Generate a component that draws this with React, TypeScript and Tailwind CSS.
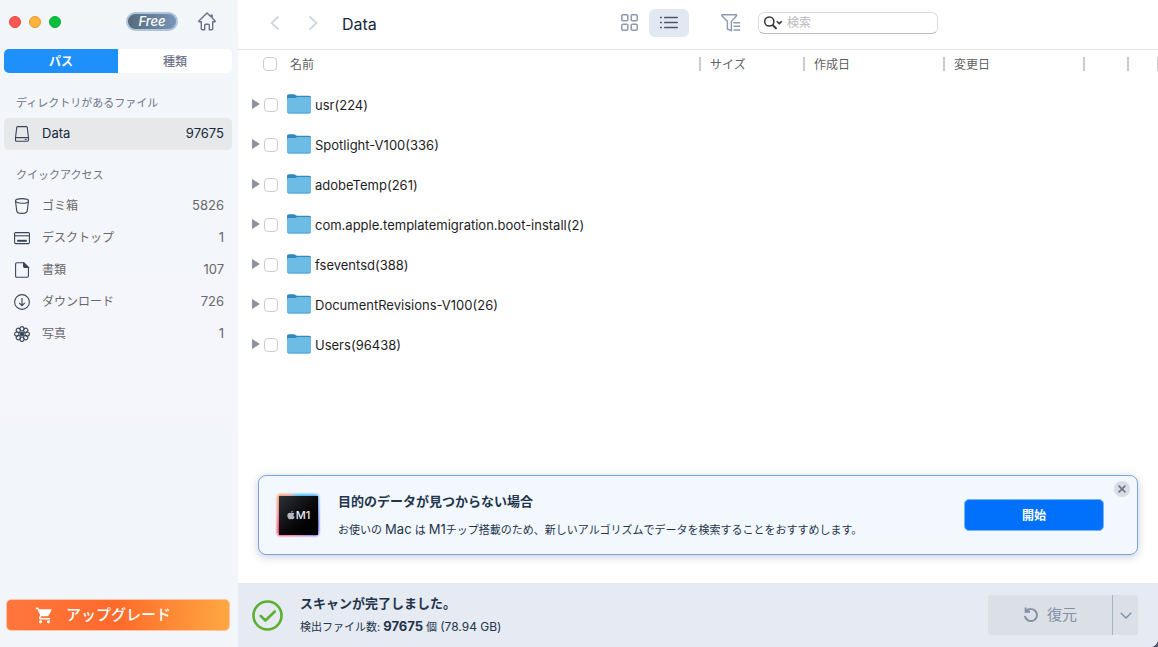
import { useState } from "react";
import type { ReactNode } from "react";
import { FaApple } from "react-icons/fa";
import { MdShoppingCart } from "react-icons/md";

type SidebarItem = {
  name: string;
  count: number;
  icon: ReactNode;
};

type Folder = {
  name: string;
  count: number;
};

const FOLDERS: Folder[] = [
  { name: "usr", count: 224 },
  { name: "Spotlight-V100", count: 336 },
  { name: "adobeTemp", count: 261 },
  { name: "com.apple.templatemigration.boot-install", count: 2 },
  { name: "fseventsd", count: 388 },
  { name: "DocumentRevisions-V100", count: 26 },
  { name: "Users", count: 96438 },
];

const PETALS = [0, 45, 90, 135, 180, 225, 270, 315];

const lineIcon = {
  width: 16,
  height: 16,
  viewBox: "0 0 16 16",
  fill: "none",
  stroke: "#39465a",
  strokeWidth: 1.1,
  "aria-hidden": true,
};

const DriveIcon = () => (
  <svg {...lineIcon}>
    <path d="M2.8 1.2Q3 .6 3.7.6h8.6q.7 0 .9.6l1.3 10.6v2.3q0 1.2-1.2 1.2H2.7q-1.2 0-1.2-1.2v-2.3z" />
    <path d="M1.6 12q.3-.4 1.1-.4h10.6q.8 0 1.1.4" />
    <path d="M10.8 13.5h1.8" />
  </svg>
);

const TrashIcon = () => (
  <svg {...lineIcon}>
    <ellipse cx="8" cy="2.9" rx="6.5" ry="2.3" />
    <path d="M1.5 3l1.2 9.6Q3 15.4 8 15.4t5.3-2.8L14.5 3" />
  </svg>
);

const DesktopIcon = () => (
  <svg {...lineIcon}>
    <rect x=".6" y="2.6" width="14.8" height="11" rx="1" />
    <path d="M.6 5.8h14.8" />
    <path d="M3.2 10.8h9.6" strokeWidth="2" />
  </svg>
);

const DocumentIcon = () => (
  <svg {...lineIcon}>
    <path d="M2.8.7h7l4.6 4.7v8.7q0 1.2-1.2 1.2H2.8q-1.2 0-1.2-1.2V1.9Q1.6.7 2.8.7z" />
    <path d="M9.6.7v3.9q0 .9.9.9h3.9z" fill="#39465a" />
  </svg>
);

const DownloadIcon = () => (
  <svg {...lineIcon}>
    <circle cx="8" cy="8" r="7.4" />
    <path d="M8 4v7.6M5.2 8.9L8 11.7l2.8-2.8" />
  </svg>
);

const PhotosIcon = () => (
  <svg {...lineIcon}>
    {PETALS.map((angle) => (
      <ellipse
        key={angle}
        cx="8"
        cy="2.8"
        rx="2"
        ry="2.2"
        transform={`rotate(${angle} 8 8)`}
      />
    ))}
    <circle cx="8" cy="8" r="1.8" fill="#39465a" />
  </svg>
);

const QUICK_ACCESS: SidebarItem[] = [
  { name: "ゴミ箱", count: 5826, icon: <TrashIcon /> },
  { name: "デスクトップ", count: 1, icon: <DesktopIcon /> },
  { name: "書類", count: 107, icon: <DocumentIcon /> },
  { name: "ダウンロード", count: 726, icon: <DownloadIcon /> },
  { name: "写真", count: 1, icon: <PhotosIcon /> },
];

const HomeIcon = () => (
  <svg width="18" height="19" viewBox="0 0 18 19" fill="none" stroke="#6a7389" strokeWidth="1.4" strokeLinejoin="round">
    <path d="M9 .9L.9 8.9q-.3.7.4.9h2v6.9q0 1.1 1.1 1.1h2.3v-4.6q0-1 1-1h2.6q1 0 1 1v4.6h2.3q1.1 0 1.1-1.1V9.8h2q.7-.2.4-.9l-2.9-2.9V3.2h-1.3v1.5z" />
  </svg>
);

const FolderIcon = () => (
  <svg width="24" height="20" viewBox="0 0 24 20" className="shrink-0" aria-hidden="true">
    <path d="M0 2Q0 .2 1.8.2h5q1 0 1.7.8t1.8.8h11.9Q24 1.8 24 3.5V10H0z" fill="#3089b9" />
    <path d="M0 5.4Q0 4 1.5 4h5.8q1 0 1.7-.5t1.6-.5h11.8Q24 3 24 4.6v13q0 1.9-1.9 1.9H1.9Q0 19.5 0 17.6z" fill="#6cbce6" />
    <path d="M.2 18q.3 1.500 1.700 1.500h20.200q1.400 0 1.700-1.500-.6.6-1.700.6H1.900Q.8 18.600.2 18z" fill="#4fa3d2" />
  </svg>
);

const Checkbox = ({ label }: { label: string }) => (
  <input
    type="checkbox"
    aria-label={label}
    className="size-3.5 shrink-0 appearance-none rounded-[4px] border border-[#cdccd0] bg-white checked:bg-[#1e90fb]"
  />
);

const SidebarRow = ({ item, active }: { item: SidebarItem; active?: boolean }) => (
  <button
    type="button"
    className={
      active
        ? "flex h-8 w-full items-center rounded-[5px] bg-[#e6e8ea] pl-2.5 pr-2 text-[#16283c]"
        : "flex h-8 w-full items-center rounded-[5px] pl-2.5 pr-2 text-[#68686b]"
    }
  >
    {item.icon}
    <span className={active ? "ml-3 text-[13px]" : "ml-3 text-xs"}>{item.name}</span>
    <span className="ml-auto text-[13px]">{item.count}</span>
  </button>
);

const Sidebar = () => {
  const [tab, setTab] = useState("path");

  const tabClass = (name: string) =>
    tab === name
      ? "flex-1 bg-[#1e90fb] pt-0.5 text-xs font-bold text-white"
      : "flex-1 bg-white pt-0.5 text-xs font-medium text-[#6e7389]";

  return (
    <aside className="flex w-[238px] shrink-0 flex-col bg-linear-to-b from-[#f2f6f9] via-[#f4f6fb] to-[#f2f5f9]">
      <div className="flex h-[43px] items-center pl-[9px]">
        <div className="flex gap-2">
          <span className="size-3 rounded-full border border-[#e2463f] bg-[#fc5753]" />
          <span className="size-3 rounded-full border border-[#e09b34] bg-[#fdb23c]" />
          <span className="size-3 rounded-full border border-[#10ab33] bg-[#05c13c]" />
        </div>
        <span className="ml-[65px] flex h-[19px] w-[52px] items-center justify-center rounded-full border-2 border-[#afc5dc] bg-linear-to-r from-[#566a7c] to-[#7797b8] pb-0.5 text-[13px] leading-4 font-medium text-white italic">
          Free
        </span>
        <button type="button" aria-label="ホーム" className="ml-5">
          <HomeIcon />
        </button>
      </div>

      <div className="mx-1 mt-1.5 mr-1.5 flex h-6 overflow-hidden rounded-[5px]">
        <button type="button" className={tabClass("path")} onClick={() => setTab("path")}>
          パス
        </button>
        <button type="button" className={tabClass("type")} onClick={() => setTab("type")}>
          種類
        </button>
      </div>

      <nav className="mt-[21px] pl-1 pr-1.5">
        <h2 className="mb-1.5 pl-3 text-[11px] leading-[18px] text-[#6e7389]">
          ディレクトリがあるファイル
        </h2>
        <SidebarRow item={{ name: "Data", count: 97675, icon: <DriveIcon /> }} active />
        <h2 className="mt-4 mb-1.5 pl-3 text-[11px] leading-[18px] text-[#6e7389]">
          クイックアクセス
        </h2>
        {QUICK_ACCESS.map((item) => (
          <SidebarRow key={item.name} item={item} />
        ))}
      </nav>

      <button
        type="button"
        className="mx-1.5 mt-auto mr-2 mb-4 flex h-8 items-center rounded-[5px] border border-[#ffc7a4] bg-linear-to-r from-[#ff763c] via-[#ff6a2b] to-[#ffa741] pl-7 text-[15px] font-medium text-white"
      >
        <MdShoppingCart size={19} />
        <span className="ml-3">アップグレード</span>
      </button>
    </aside>
  );
};

const Toolbar = () => (
  <header className="flex h-[50px] shrink-0 items-center border-b border-[#e6e7e9] pb-1 pl-8">
    <button type="button" aria-label="戻る">
      <svg width="10" height="16" viewBox="0 0 10 16" fill="none" stroke="#cbd5e3" strokeWidth="1.8">
        <path d="M8.5 1.5L1.5 8l7 6.500" />
      </svg>
    </button>
    <button type="button" aria-label="進む" className="ml-7">
      <svg width="10" height="16" viewBox="0 0 10 16" fill="none" stroke="#cbd5e3" strokeWidth="1.8">
        <path d="M1.5 1.5l7 6.500-7 6.500" />
      </svg>
    </button>
    <h1 className="ml-6 pt-0.5 text-base text-[#16283c]">Data</h1>

    <div className="mr-[220px] ml-auto flex items-center">
      <button type="button" aria-label="アイコン表示">
        <svg width="17" height="17" viewBox="0 0 17 17" fill="none" stroke="#8b9bb3" strokeWidth="1.5">
          <rect x=".8" y=".8" width="6" height="6" rx="1" />
          <rect x="10.2" y=".8" width="6" height="6" rx="1" />
          <rect x=".8" y="10.2" width="6" height="6" rx="1" />
          <rect x="10.2" y="10.2" width="6" height="6" rx="1" />
        </svg>
      </button>
      <button
        type="button"
        aria-label="リスト表示"
        className="ml-[11px] flex h-7 w-10 items-center justify-center rounded-md bg-[#e2e8f1]"
      >
        <svg width="18" height="13" viewBox="0 0 18 13" fill="none" stroke="#4d566c" strokeWidth="1.7">
          <path d="M0 1.5h1.8M0 6.5h1.8M0 11.5h1.8" />
          <path d="M4.8 1.5h12.4M4.8 6.5h12.4M4.8 11.5h12.4" strokeLinecap="round" />
        </svg>
      </button>
      <button type="button" aria-label="フィルター" className="ml-8">
        <svg width="20" height="18" viewBox="0 0 20 18" fill="none" stroke="#8b9bb3" strokeWidth="1.4">
          <path d="M1 .8h14.4q.5.4.1.9L10.4 7.4v9.2L6.4 15V7.4L.9 1.7Q.5 1.2 1 .8z" />
          <path d="M12.5 8.7h6.7M12.5 12.3h6.7M12.5 16h6.7" />
        </svg>
      </button>
      <label className="ml-[17px] flex h-[22px] w-[180px] items-center rounded-md border border-[#dcdcde] border-b-[#bdbdc0] bg-white pl-[5px]">
        <svg width="19" height="14" viewBox="0 0 19 14" fill="none" stroke="#333335" strokeWidth="1.5" className="shrink-0" aria-hidden="true">
          <circle cx="5.3" cy="5.5" r="4.6" />
          <path d="M8.6 8.9l3.900 4" strokeWidth="2" />
          <path d="M12.8 5.2l2.500 2.400 2.500-2.400" />
        </svg>
        <input
          type="text"
          aria-label="検索"
          placeholder="検索"
          className="ml-1 w-full min-w-0 bg-transparent text-xs outline-none placeholder:text-[#b9b9bc]"
        />
      </label>
    </div>
  </header>
);

const ColumnHead = ({ label, className }: { label?: string; className: string }) => (
  <th scope="col" className={className}>
    <div className="flex h-5 items-center">
      <span className="h-3.5 w-0.5 shrink-0 bg-[#cacacc]" />
      {label && <span className="ml-[9px] pt-0.5">{label}</span>}
    </div>
  </th>
);

const FileTable = () => (
  <table className="w-full table-fixed border-collapse">
    <thead className="text-left text-xs text-[#5f6063]">
      <tr className="h-[35px] align-top *:pt-1 *:font-normal">
        <th scope="col">
          <div className="flex h-5 items-center pl-[25px]">
            <Checkbox label="すべて選択" />
            <span className="ml-[13px] pt-0.5">名前</span>
          </div>
        </th>
        <ColumnHead label="サイズ" className="w-[104px]" />
        <ColumnHead label="作成日" className="w-[140px]" />
        <ColumnHead label="変更日" className="w-[140px]" />
        <ColumnHead className="w-11" />
        <ColumnHead className="w-[30px]" />
        <ColumnHead className="w-px" />
      </tr>
    </thead>
    <tbody className="text-[13px] text-[#1d1d1f]">
      {FOLDERS.map((folder) => (
        <tr key={folder.name} className="h-10">
          <td className="p-0">
            <div className="flex items-center pl-3.5">
              <button type="button" aria-label={`${folder.name}を展開`} className="w-3 pb-0.5">
                <svg width="8" height="10" viewBox="0 0 8 10" fill="#8e90a0">
                  <path d="M0 0l8 5-8 5z" />
                </svg>
              </button>
              <Checkbox label={folder.name} />
              <span className="ml-[9px] pb-0.5">
                <FolderIcon />
              </span>
              <span className="ml-1 pt-0.5">
                {folder.name}({folder.count})
              </span>
            </div>
          </td>
          <td />
          <td />
          <td />
          <td />
          <td />
          <td />
        </tr>
      ))}
    </tbody>
  </table>
);

const ChipLogo = () => (
  <div className="relative flex size-[46px] shrink-0 items-center justify-center">
    <div className="absolute inset-0.5 rounded-[4px] bg-[conic-gradient(from_0deg,#35c3f3,#5ab0f5_12%,#3c3fc4_32%,#a35fd0_42%,#f0508f_55%,#f53f63_64%,#f08a8a_78%,#ff9a62_88%,#e0a0a0_94%,#35c3f3)] blur-[1px]" />
    <div className="relative flex size-[39px] items-center justify-center bg-linear-to-br from-[#30323a] via-[#0c0c0f] to-black text-[11px] font-medium text-[#e8e8ec]">
      <FaApple size={10} className="text-[#b4b5c0]" />
      <span>M1</span>
    </div>
  </div>
);

const Banner = ({ onClose }: { onClose: () => void }) => (
  <section className="relative mx-5 mt-auto mb-7 flex h-20 items-center rounded-lg border border-[#7da2e0] bg-[#f3f8ff] pr-[33px] pl-4 shadow-[0_2px_8px_rgba(40,60,110,0.25)]">
    <ChipLogo />
    <div className="ml-[17px] text-[#22344b]">
      <h2 className="text-[13px] leading-5 font-bold">目的のデータが見つからない場合</h2>
      <p className="mt-2 text-[11px] leading-5">
        お使いの <span className="text-[13px]">Mac</span> は <span className="text-[13px]">M1</span>
        チップ搭載のため、新しいアルゴリズムでデータを検索することをおすすめします。
      </p>
    </div>
    <button
      type="button"
      className="ml-auto h-8 w-[140px] shrink-0 rounded-[5px] border border-[#72b2ff] bg-[#0170fb] pt-0.5 text-xs font-bold text-white"
    >
      開始
    </button>
    <button
      type="button"
      aria-label="閉じる"
      onClick={onClose}
      className="absolute top-[5px] right-[7px] flex size-4 items-center justify-center rounded-full bg-[#d8dde5]"
    >
      <svg width="8" height="8" viewBox="0 0 8 8" stroke="#6b7282" strokeWidth="1.5">
        <path d="M.6.6l6.8 6.8M7.4.6L.6 7.4" />
      </svg>
    </button>
  </section>
);

const StatusBar = () => (
  <footer className="flex h-16 shrink-0 items-center bg-[#e6eaf2] pr-5 pl-3.5">
    <svg width="31" height="31" viewBox="0 0 31 31" fill="none" stroke="#5cb030" strokeWidth="2.6" aria-hidden="true">
      <circle cx="15.5" cy="15.5" r="14" />
      <path d="M8.7 15.8l4.7 4.7 9.4-9" strokeLinecap="round" strokeLinejoin="round" />
    </svg>
    <div className="ml-[17px] text-[#22344b]">
      <p className="text-[13px] leading-[22px] font-bold">スキャンが完了しました。</p>
      <p className="text-[11px] leading-6">
        検出ファイル数: <strong className="text-[13px]">97675</strong> 個{" "}
        <span className="text-xs">(78.94 GB)</span>
      </p>
    </div>
    <div className="ml-auto flex h-10 overflow-hidden rounded-[3px] bg-[#dbe0e7] text-[15px] text-[#8290a3]">
      <button type="button" disabled className="flex w-[124px] items-center justify-center gap-2">
        <svg width="16" height="16" viewBox="0 0 16 16" fill="none" stroke="currentColor" strokeWidth="2" aria-hidden="true">
          <path d="M3 4.2Q5.200 2 8 2.100A6 6 0 1 1 2 8.800" />
          <path d="M2.600.6v4.200h4.400" />
        </svg>
        復元
      </button>
      <button
        type="button"
        disabled
        aria-label="復元オプション"
        className="flex w-[26px] items-center justify-center border-l border-[#a9b2c0]"
      >
        <svg width="12" height="7" viewBox="0 0 12 7" fill="none" stroke="currentColor" strokeWidth="1.4">
          <path d="M.7.7L6 6 11.3.7" />
        </svg>
      </button>
    </div>
  </footer>
);

const App = () => {
  const [showBanner, setShowBanner] = useState(true);

  return (
    <div lang="ja" className="bg-[#565070] font-['Inter','Noto_Sans_CJK_JP',sans-serif]">
      <div className="flex min-h-screen overflow-hidden rounded-br-lg bg-white">
        <Sidebar />
        <main className="flex min-w-0 flex-1 flex-col">
          <Toolbar />
          <FileTable />
          <div className="mt-auto">
            {showBanner && <Banner onClose={() => setShowBanner(false)} />}
            <StatusBar />
          </div>
        </main>
      </div>
    </div>
  );
};

export default App;
